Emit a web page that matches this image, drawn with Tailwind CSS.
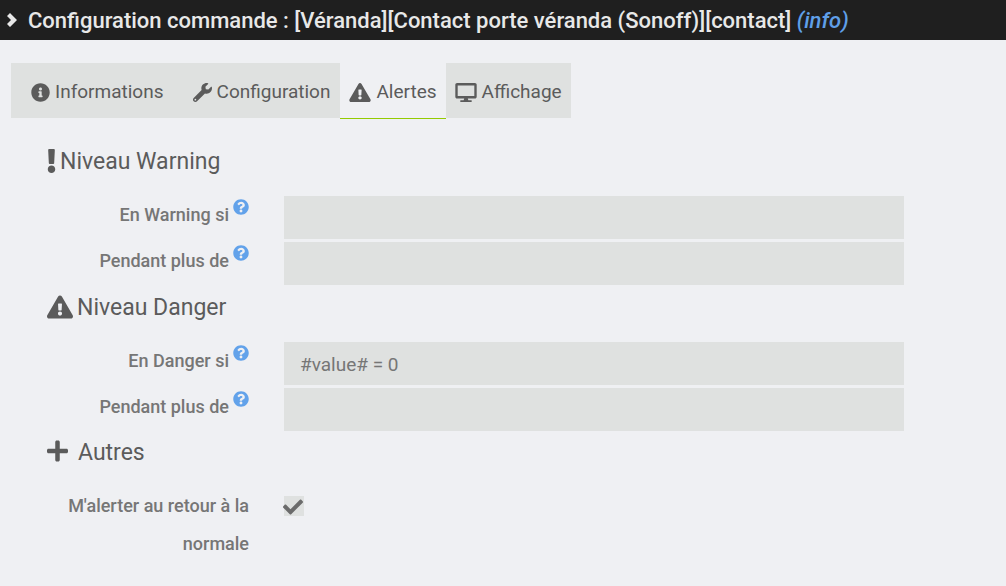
<!doctype html>
<html lang="fr">
  <head>
    <meta charset="UTF-8" />
    <meta name="viewport" content="width=device-width, initial-scale=1.0" />
    <title>Configuration commande</title>
    <script src="https://cdn.jsdelivr.net/npm/@tailwindcss/browser@4"></script>
  </head>
  <body class="min-h-screen bg-[#eff0f3] font-['Roboto',sans-serif] text-[#5b5b5b]">
    <svg class="hidden">
      <symbol id="icon-info" viewBox="0 0 512 512">
        <path d="M256 8C119 8 8 119 8 256s111 248 248 248 248-111 248-248S393 8 256 8zm0 110c23.200 0 42 18.800 42 42s-18.800 42-42 42-42-18.800-42-42 18.800-42 42-42zm56 254c0 6.600-5.400 12-12 12h-88c-6.600 0-12-5.400-12-12v-24c0-6.600 5.400-12 12-12h12v-64h-12c-6.600 0-12-5.400-12-12v-24c0-6.600 5.400-12 12-12h64c6.600 0 12 5.400 12 12v100h12c6.600 0 12 5.400 12 12v24z" />
      </symbol>
      <symbol id="icon-wrench" viewBox="0 0 512 512">
        <path d="M507.730 109.100c-2.240-9.030-13.540-12.090-20.120-5.510l-74.360 74.360-67.880-11.310-11.310-67.880 74.360-74.360c6.620-6.620 3.430-17.900-5.660-20.160-47.380-11.740-99.550.91-136.580 37.930-39.640 39.640-50.550 97.100-34.050 147.200L18.740 402.760c-24.990 24.990-24.990 65.510 0 90.500 24.990 24.990 65.510 24.990 90.500 0l213.210-213.210c50.120 16.710 107.470 5.680 147.370-34.220 37.070-37.070 49.700-89.320 37.910-136.730zM64 472c-13.250 0-24-10.750-24-24 0-13.260 10.750-24 24-24s24 10.740 24 24c0 13.250-10.750 24-24 24z" />
      </symbol>
      <symbol id="icon-warning" viewBox="0 0 576 512">
        <path d="M569.517 440.013C587.975 472.007 564.806 512 527.940 512H48.054c-36.937 0-59.999-40.055-41.577-71.987L246.423 23.985c18.467-32.009 64.720-31.951 83.154 0l239.940 416.028zM288 354c-25.405 0-46 20.595-46 46s20.595 46 46 46 46-20.595 46-46-20.595-46-46-46zm-43.673-165.346l7.418 136c.347 6.364 5.609 11.346 11.982 11.346h48.546c6.373 0 11.635-4.982 11.982-11.346l7.418-136c.375-6.874-5.098-12.654-11.982-12.654h-63.383c-6.884 0-12.356 5.780-11.981 12.654z" />
      </symbol>
      <symbol id="icon-desktop" viewBox="0 0 576 512">
        <path d="M528 0H48C21.500 0 0 21.500 0 48v320c0 26.500 21.500 48 48 48h192l-16 48h-72c-13.300 0-24 10.700-24 24s10.700 24 24 24h272c13.300 0 24-10.700 24-24s-10.700-24-24-24h-72l-16-48h192c26.500 0 48-21.500 48-48V48c0-26.500-21.500-48-48-48zm-16 352H64V64h448v288z" />
      </symbol>
      <symbol id="icon-exclamation" viewBox="0 0 192 512">
        <path d="M176 432c0 44.112-35.888 80-80 80s-80-35.888-80-80 35.888-80 80-80 80 35.888 80 80zM25.260 25.199l13.600 272C39.499 309.972 50.041 320 62.830 320h66.340c12.789 0 23.331-10.028 23.970-22.801l13.600-272C167.425 11.490 156.496 0 142.770 0H49.230C35.504 0 24.575 11.490 25.260 25.199z" />
      </symbol>
      <symbol id="icon-plus" viewBox="0 0 448 512">
        <path d="M416 208H272V64c0-17.670-14.330-32-32-32h-32c-17.670 0-32 14.330-32 32v144H32c-17.670 0-32 14.330-32 32v32c0 17.670 14.330 32 32 32h144v144c0 17.670 14.330 32 32 32h32c17.670 0 32-14.330 32-32V304h144c17.670 0 32-14.330 32-32v-32c0-17.670-14.330-32-32-32z" />
      </symbol>
      <symbol id="icon-question" viewBox="0 0 512 512">
        <path d="M504 256c0 136.997-111.043 248-248 248S8 392.997 8 256C8 119.083 119.043 8 256 8s248 111.083 248 248zM262.655 90c-54.497 0-89.255 22.957-116.549 63.758-3.536 5.286-2.353 12.415 2.715 16.258l34.699 26.310c5.205 3.947 12.621 3.008 16.665-2.122 17.864-22.658 30.113-35.797 57.303-35.797 20.429 0 45.698 13.148 45.698 32.958 0 14.976-12.363 22.667-32.534 33.976C247.128 238.528 216 254.941 216 296v4c0 6.627 5.373 12 12 12h56c6.627 0 12-5.373 12-12v-1.333c0-28.462 83.186-29.647 83.186-106.667 0-58.002-60.165-102-116.531-102zM256 338c-25.365 0-46 20.635-46 46 0 25.364 20.635 46 46 46s46-20.636 46-46c0-25.365-20.635-46-46-46z" />
      </symbol>
      <symbol id="icon-check" viewBox="0 0 512 512">
        <path d="M173.898 439.404l-166.400-166.400c-9.997-9.997-9.997-26.206 0-36.204l36.203-36.204c9.997-9.998 26.207-9.998 36.204 0L192 312.690 432.095 72.596c9.997-9.997 26.207-9.997 36.204 0l36.203 36.204c9.997 9.997 9.997 26.206 0 36.204l-294.400 294.401c-9.998 9.997-26.207 9.997-36.204-.001z" />
      </symbol>
      <symbol id="icon-chevron" viewBox="0 0 10 14">
        <path d="M3 0L10 7L3 14L0 11L4 7L0 3Z" />
      </symbol>
    </svg>

    <header class="flex h-10 items-center bg-[#1f1f1f] pl-[7px] text-[#e8e8e8]">
      <svg class="mr-[11px] h-[14px] w-[10px] fill-current"><use href="#icon-chevron" /></svg>
      <h1 class="text-[22px] font-medium whitespace-nowrap">
        Configuration commande : [Véranda][Contact porte véranda (Sonoff)][contact]
        <em class="text-[#5f9fe8]">(info)</em>
      </h1>
    </header>

    <nav class="mt-[23px] ml-[11px] flex h-14 text-[19px]" role="tablist">
      <button class="mb-px flex items-center gap-[5px] bg-[#dfe1e0] pt-1 pr-[10px] pl-5" role="tab">
        <svg class="size-[19px] fill-current"><use href="#icon-info" /></svg>
        Informations
      </button>
      <button class="mb-px flex items-center gap-[5px] bg-[#dfe1e0] pt-1 pr-[10px] pl-[19px]" role="tab">
        <svg class="size-[19px] fill-current"><use href="#icon-wrench" /></svg>
        Configuration
      </button>
      <button class="flex items-center gap-[5px] border-b border-[#94ca02] px-[9px] pt-1" role="tab" aria-selected="true">
        <svg class="h-[19px] w-[22px] fill-current"><use href="#icon-warning" /></svg>
        Alertes
      </button>
      <button class="mb-px flex items-center gap-[5px] bg-[#dfe1e0] px-[9px] pt-1" role="tab">
        <svg class="h-[19px] w-[22px] fill-current"><use href="#icon-desktop" /></svg>
        Affichage
      </button>
    </nav>

    <form class="mt-5 mr-[102px] ml-[47px]">
      <fieldset>
        <legend class="flex h-[57px] items-start gap-1 text-[23px] leading-[45px]">
          <svg class="mt-[10px] h-6 w-[9px] fill-current"><use href="#icon-exclamation" /></svg>
          Niveau Warning
        </legend>
        <div class="mb-[3px] flex">
          <div class="mr-[35px] flex w-[202px] justify-end gap-1">
            <label for="warning-if" class="text-lg leading-[38px] font-medium text-[#767676]">En Warning si</label>
            <svg class="mt-[3px] size-4 fill-[#62a2ea]"><use href="#icon-question" /></svg>
          </div>
          <input id="warning-if" type="text" class="h-[43px] min-w-0 flex-1 bg-[#dfe1e0] px-4 text-[19px] text-[#767676]" />
        </div>
        <div class="flex">
          <div class="mr-[35px] flex w-[202px] justify-end gap-1">
            <label for="warning-during" class="text-lg leading-[38px] font-medium text-[#767676]">Pendant plus de</label>
            <svg class="mt-[3px] size-4 fill-[#62a2ea]"><use href="#icon-question" /></svg>
          </div>
          <input id="warning-during" type="text" class="h-[43px] min-w-0 flex-1 bg-[#dfe1e0] px-4 text-[19px] text-[#767676]" />
        </div>
      </fieldset>

      <fieldset>
        <legend class="flex h-[57px] items-start gap-1 text-[23px] leading-[45px]">
          <svg class="mt-[10px] h-6 w-[26px] fill-current"><use href="#icon-warning" /></svg>
          Niveau Danger
        </legend>
        <div class="mb-[3px] flex">
          <div class="mr-[35px] flex w-[202px] justify-end gap-1">
            <label for="danger-if" class="text-lg leading-[38px] font-medium text-[#767676]">En Danger si</label>
            <svg class="mt-[3px] size-4 fill-[#62a2ea]"><use href="#icon-question" /></svg>
          </div>
          <input id="danger-if" type="text" value="#value# = 0" class="h-[43px] min-w-0 flex-1 bg-[#dfe1e0] px-4 pt-[2px] text-[19px] text-[#767676]" />
        </div>
        <div class="flex">
          <div class="mr-[35px] flex w-[202px] justify-end gap-1">
            <label for="danger-during" class="text-lg leading-[38px] font-medium text-[#767676]">Pendant plus de</label>
            <svg class="mt-[3px] size-4 fill-[#62a2ea]"><use href="#icon-question" /></svg>
          </div>
          <input id="danger-during" type="text" class="h-[43px] min-w-0 flex-1 bg-[#dfe1e0] px-4 text-[19px] text-[#767676]" />
        </div>
      </fieldset>

      <fieldset>
        <legend class="flex h-14 items-start gap-[10px] text-[23px] leading-[44px]">
          <svg class="mt-2 h-6 w-[21px] fill-current"><use href="#icon-plus" /></svg>
          Autres
        </legend>
        <div class="flex">
          <label for="alert-back" class="mr-[35px] w-[202px] text-right text-lg leading-[38px] font-medium text-[#767676]">M'alerter au retour à la normale</label>
          <div class="relative mt-[9px] size-5">
            <input id="alert-back" type="checkbox" checked class="peer block size-5 appearance-none bg-[#dfe1e0]" />
            <svg class="pointer-events-none absolute top-px right-px hidden size-5 fill-[#6b6b6b] peer-checked:block"><use href="#icon-check" /></svg>
          </div>
        </div>
      </fieldset>
    </form>
  </body>
</html>
